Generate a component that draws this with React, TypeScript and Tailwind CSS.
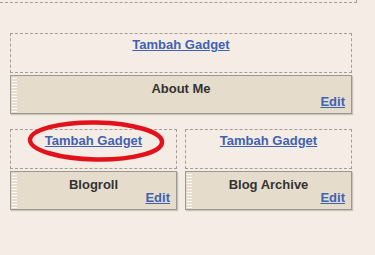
import React from "react";

function AddGadget({ children }: { children?: React.ReactNode }) {
  return (
    <div className="relative h-[40px] border border-dashed border-[#a39d96] pt-[3px] text-center text-[13px] leading-[16px]">
      <a href="#" className="font-bold text-[#3f62b3] underline">
        Tambah Gadget
      </a>
      {children}
    </div>
  );
}

function Widget({ title }: { title: string }) {
  return (
    <div className="relative mt-[2px] h-[39px] border border-[#9c9790] bg-[#e6dccb] text-[13px] shadow-[1px_1px_1px_#c8c2b9]">
      <div className="absolute left-[1px] top-[1px] bottom-[1px] w-[5px] bg-[radial-gradient(circle,#ffffff_0.8px,transparent_1px)] bg-[length:2.5px_3px]" />
      <div className="pt-[5px] text-center font-bold leading-[15px] text-[#333]">{title}</div>
      <div className="-mt-[1px] pr-[6px] text-right leading-[13px]">
        <a href="#" className="font-bold text-[#3f62b3] underline">
          Edit
        </a>
      </div>
    </div>
  );
}

export default function App() {
  return (
    <div className="h-[255px] w-[375px] overflow-hidden bg-[#f5ede5] font-['Liberation_Sans',Arial,sans-serif]">
      <div className="h-[3px] w-[357px] border-b border-r border-dashed border-[#a39d96]" />
      <div className="ml-[10px] mt-[30px] w-[342px]">
        <AddGadget />
        <Widget title="About Me" />
        <div className="mt-[15px] grid grid-cols-2 gap-x-[8px]">
          <div>
            <AddGadget>
              <svg
                className="pointer-events-none absolute left-[15px] top-[-11px]"
                width="140"
                height="46"
                viewBox="0 0 140 46"
              >
                <ellipse
                  cx="70"
                  cy="22"
                  rx="66"
                  ry="18.5"
                  fill="none"
                  stroke="#e3111b"
                  strokeWidth="4.5"
                  transform="rotate(1 70 22)"
                />
              </svg>
            </AddGadget>
            <Widget title="Blogroll" />
          </div>
          <div>
            <AddGadget />
            <Widget title="Blog Archive" />
          </div>
        </div>
      </div>
    </div>
  );
}
